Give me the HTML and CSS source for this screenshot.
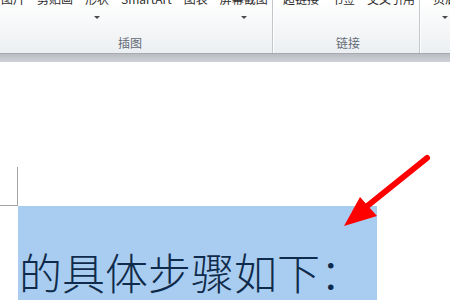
FILE: index.html
```html
<!DOCTYPE html>
<html lang="zh-CN">
<head>
    <meta charset="UTF-8">
    <meta name="viewport" content="width=device-width, initial-scale=1.0">
    <title>插入 - 链接</title>
    <link rel="stylesheet" href="styles.css">
</head>
<body>
<div class="ribbon">
  <div class="group group-illus">
    <div class="btns">
      <div class="btn"><span>图片</span></div>
      <div class="btn"><span>剪贴画</span></div>
      <div class="btn"><span>形状</span><i class="caret"></i></div>
      <div class="btn"><span>SmartArt</span></div>
      <div class="btn"><span>图表</span></div>
      <div class="btn"><span>屏幕截图</span><i class="caret"></i></div>
    </div>
    <div class="glabel">插图</div>
  </div>
  <div class="group group-links">
    <div class="btns">
      <div class="btn"><span>超链接</span></div>
      <div class="btn"><span>书签</span></div>
      <div class="btn"><span>交叉引用</span></div>
    </div>
    <div class="glabel">链接</div>
  </div>
  <div class="group group-head">
    <div class="btns">
      <div class="btn"><span>页眉</span><i class="caret"></i></div>
    </div>
  </div>
</div>
<div class="ribbon-shadow"></div>

<div class="doc">
  <div class="crop-mark"></div>
  <div class="selection">
    <p class="line">的具体步骤如下：</p>
  </div>
  <!-- annotation arrow drawn over the page -->
  <svg class="arrow" width="450" height="240" viewBox="0 0 450 240">
    <line x1="427" y1="96" x2="366" y2="145" stroke="#ff0000" stroke-width="6" stroke-linecap="round"/>
    <polygon points="344,164 360,135 377,154" fill="#ff0000"/>
  </svg>
</div>
</body>
</html>
```

FILE: styles.css
```css
html, body {
  margin: 0;
  padding: 0;
  background: #ffffff;
  overflow: hidden;
}

body {
  font-family: "Noto Sans CJK SC", "Noto Sans", sans-serif;
  width: 450px;
  height: 300px;
}

/* ribbon strip */
.ribbon {
  display: flex;
  height: 53px;
  background: linear-gradient(#ffffff, #eceff2);
  border-bottom: 1px solid #a7abb1;
  overflow: hidden;
}

.group {
  display: flex;
  flex-direction: column;
  flex-shrink: 0;
  border-right: 1px solid #c3c7cc;
  box-shadow: 1px 0 0 #ffffff;
  margin-right: 1px;
}

.group-illus {
  width: 271px;
  padding-left: 1px;
}

.group-links {
  width: 136px;
  padding-left: 9px;
}

.group-head {
  padding-left: 12px;
  border-right: none;
}

.btns {
  display: flex;
  gap: 12px;
  margin-top: -9px;
  height: 40px;
}

.btn {
  display: flex;
  flex-direction: column;
  align-items: center;
  font-size: 12px;
  line-height: 16px;
  color: #2e2e2e;
  white-space: nowrap;
}

.caret {
  margin-top: 9px;
  width: 0;
  height: 0;
  border-left: 3px solid transparent;
  border-right: 3px solid transparent;
  border-top: 3px solid #4a4a4a;
}

.glabel {
  font-size: 12px;
  line-height: 14px;
  color: #636b76;
  text-align: left;
  margin-top: 5px;
}

.group-illus .glabel {
  margin-left: 117px;
}

.group-links .glabel {
  margin-left: 53px;
}

.ribbon-shadow {
  height: 8px;
  background: linear-gradient(#b9bdc2, #cfd2d6);
}

/* document area */
.doc {
  position: relative;
  height: 238px;
  display: flex;
  flex-direction: column;
}

.crop-mark {
  width: 17px;
  height: 38px;
  margin-top: 105px;
  border-right: 1px solid #a3a3a3;
  border-bottom: 1px solid #a3a3a3;
}

.selection {
  margin-left: 18px;
  width: 359px;
  flex: 1;
  background: #a9cdf0;
}

.line {
  margin: 40px 0 0 1px;
  font-size: 43px;
  line-height: 50px;
  font-weight: 300;
  color: #0f2a4a;
  white-space: nowrap;
}

.arrow {
  position: absolute;
  left: 0;
  top: 0;
}
```
